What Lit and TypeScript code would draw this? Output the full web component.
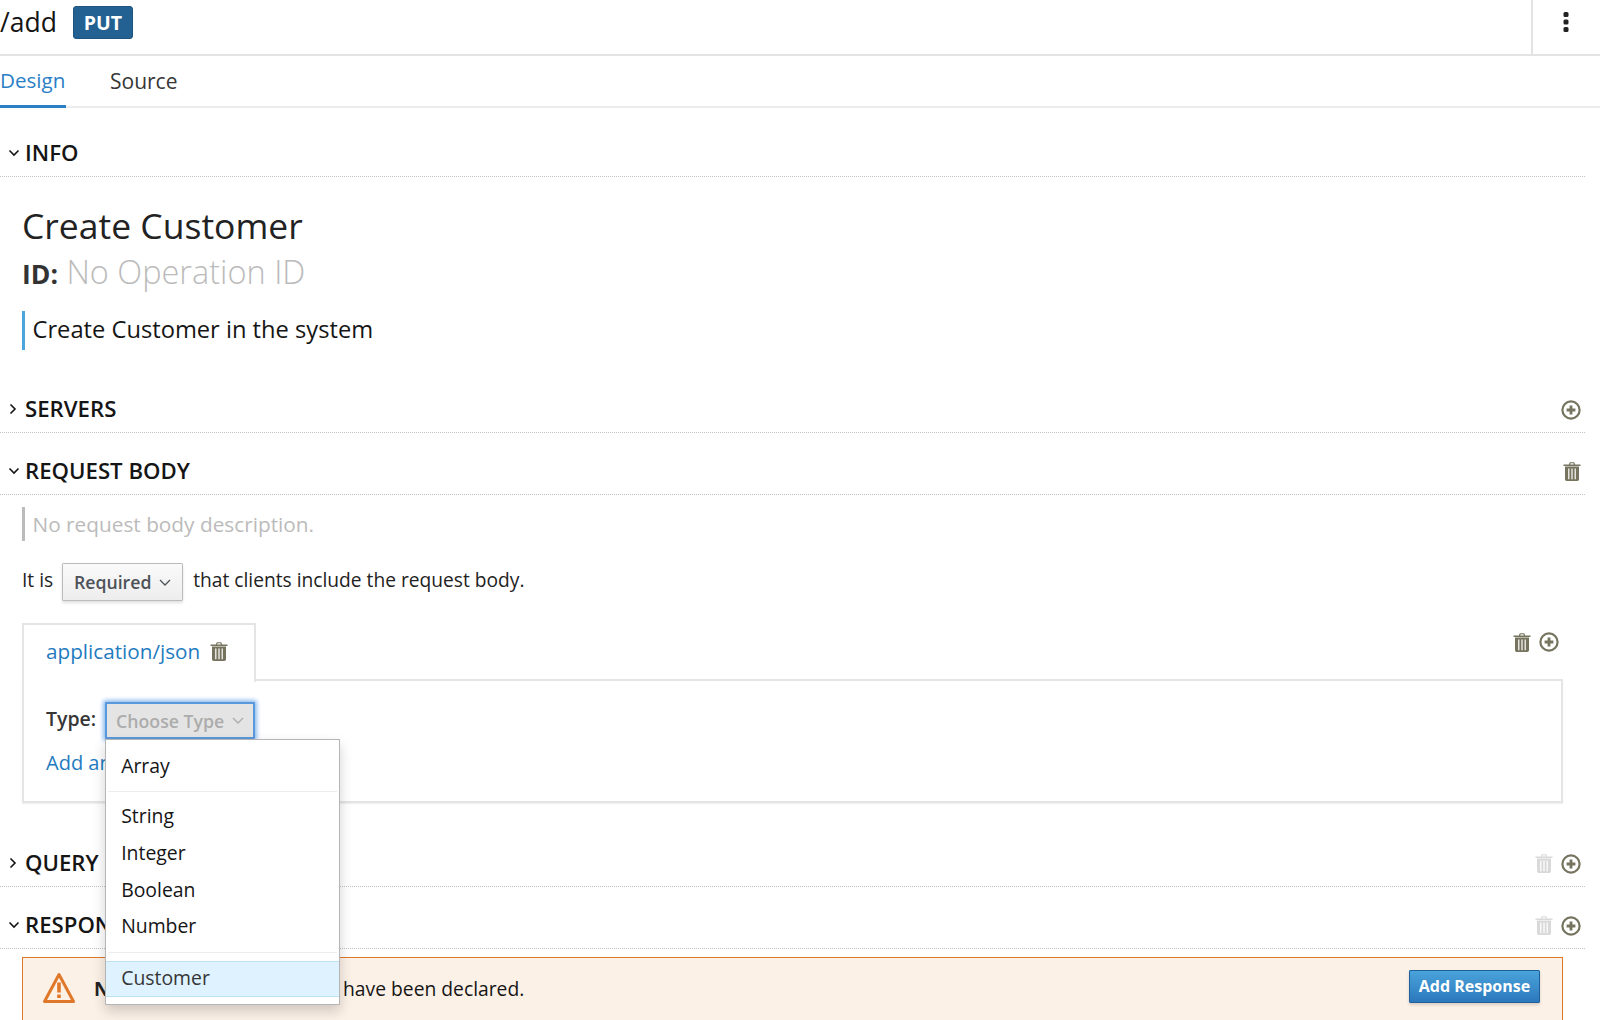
import { LitElement, html, css } from "lit";
import { customElement } from "lit/decorators.js";

const chevDown = html`<svg class="chev" width="12" height="8" viewBox="0 0 12 8"><path d="M1.5 1.5 6 6l4.5-4.5" fill="none" stroke="#151515" stroke-width="1.6"/></svg>`;
const chevRight = html`<svg class="chev" width="12" height="12" viewBox="0 0 12 12"><path d="M3.5 1.5 8 6l-4.5 4.5" fill="none" stroke="#151515" stroke-width="1.6"/></svg>`;
const caret = (c: string) => html`<svg class="caret" width="12" height="7" viewBox="0 0 12 7"><path d="M1 1l5 5 5-5" fill="none" stroke="${c}" stroke-width="1.3"/></svg>`;
const trash = (c = "#76745f") => html`<svg class="ico" width="18" height="19" viewBox="0 0 18 19"><path fill="${c}" d="M5.8 2.4 6.8.3h4.4l1 2.1h5.3v1.5H.5V2.4zM7.6 1.3 7.2 2.4h3.6l-.4-1.1z"/><path fill="${c}" fill-rule="evenodd" d="M2 4.6h14v12.7A1.7 1.7 0 0 1 14.3 19H3.7A1.7 1.7 0 0 1 2 17.3zM5.2 6.4v10.8h1.2V6.4zm3.2 0v10.8h1.2V6.4zm3.2 0v10.8h1.2V6.4z"/></svg>`;
const plus = () => html`<svg class="ico" width="20" height="20" viewBox="0 0 20 20"><circle cx="10" cy="10" r="8.6" fill="none" stroke="#76745f" stroke-width="2.2"/><path d="M10 5.6v8.8M5.6 10h8.8" stroke="#76745f" stroke-width="2.8"/></svg>`;

@customElement("app-root")
export class AppRoot extends LitElement {
  static styles = css`
    :host { display: block; width: 1600px; height: 1020px; overflow: hidden; background: #fff; font-family: "Open Sans", "Liberation Sans", sans-serif; color: #151515; font-size: 20px; }
    * { box-sizing: border-box; }
    .top { display: flex; align-items: center; height: 56px; border-bottom: 2px solid #e3e3e3; }
    .path { font-size: 26.5px; line-height: 36px; margin: -10px 16px 0 0; }
    .badge { width: 60px; height: 33px; margin-top: -10px; background: #236192; border: 1px solid #1d5480; border-radius: 3px; color: #fff; font-weight: 700; font-size: 19.5px; display: flex; align-items: center; justify-content: center; }
    .kebab { margin-left: auto; width: 69px; height: 54px; border-left: 2px solid #e3e3e3; display: flex; align-items: center; justify-content: center; padding: 0 2px 10px 0; }
    .tabs { display: flex; height: 52px; border-bottom: 2px solid #ededed; }
    .tab { height: 52px; padding-top: 9px; font-size: 21px; color: #363636; line-height: 32px; }
    .tab.on { width: 66px; font-size: 20.6px; padding-top: 8px; color: #2a7fc6; border-bottom: 3px solid #2a7fc6; margin-right: 44px; }
    .head { height: 46px; margin: 16px 0 0; width: 1585px; border-bottom: 1px dotted #c4c4c4; display: flex; align-items: center; padding: 0 4px 2px 8px; }
    .head.first { margin-top: 23px; }
    .head .name { font-size: 22.2px; font-weight: 600; white-space: nowrap; margin-left: 5px; line-height: 30px; }
    .head.closed { padding-left: 7px; }
    .head.closed .name { margin-left: 6px; }
    .spacer { margin-left: auto; margin-top: 2px; display: flex; gap: 8px; align-items: center; }
    .ico { display: block; flex: none; }
    .info { padding: 22px 0 0 22px; height: 194px; }
    .title { font-size: 35.5px; line-height: 53px; color: #222; }
    .opid { font-size: 32.5px; line-height: 40px; font-weight: 300; color: #bbb; }
    .opid b { font-weight: 700; color: #333; font-size: 26.5px; }
    .desc { margin: 17px 0 0 0; border-left: 3px solid #4aa5dc; height: 39px; padding-left: 7.5px; font-size: 23.7px; line-height: 37px; }
    .rb { padding: 12px 0 0 22px; width: 1563px; height: 330px; }
    .none { border-left: 3px solid #bbb; height: 34px; padding-left: 7.5px; font-size: 20.8px; line-height: 34px; color: #bbb; }
    .req { display: flex; align-items: center; height: 38px; margin-top: 22px; font-size: 19.2px; color: #222; }
    .btn { display: flex; align-items: center; justify-content: center; gap: 8px; font-weight: 600; font-size: 17.7px; border-radius: 1px; }
    .required { width: 121px; height: 38px; margin: 0 10px 0 9px; background: linear-gradient(#fafafa, #ededed); border: 1px solid #bbb; color: #4d5258; box-shadow: 0 2px 3px rgba(0,0,0,.12); }
    .req span { margin-top: -5px; }
    .mt-row { display: flex; align-items: flex-start; height: 56px; margin-top: 22px; }
    .mt { width: 234px; height: 59px; border: 2px solid #e5e5e5; border-bottom: none; background: #fff; position: relative; z-index: 1; display: flex; align-items: center; padding: 0 0 5px 22px; gap: 10px; font-size: 20.7px; color: #1f7bc0; }
    .mt-icons { margin-left: auto; margin-right: 4px; margin-top: 9px; display: flex; gap: 8px; align-items: center; }
    .panel { border: 2px solid #e5e5e5; height: 124px; padding: 19px 0 0 22px; box-shadow: 0 1px 1px rgba(0,0,0,.06); }
    .type { display: flex; align-items: center; font-weight: 600; color: #363636; font-size: 19.5px; height: 38px; }
    .type-label { margin-top: -2px; }
    .typebox { position: relative; margin: 3px 0 0 9px; }
    .choose { width: 150px; height: 37px; background: #e4e4e4; color: #acacac; border: 2px solid #5a98dc; box-shadow: 0 0 4px 2px #8fbcef; }
    .menu { position: absolute; left: 0; top: 37px; width: 235px; height: 266px; background: #fff; border: 1px solid #b5b5b5; box-shadow: 0 6px 12px rgba(0,0,0,.18); z-index: 5; font-weight: 400; padding: 9px 0 0; color: #151515; font-size: 19.4px; }
    .item { height: 36.7px; line-height: 34px; padding-left: 15px; white-space: nowrap; }
    .sep { height: 1px; background: #ededed; margin: 6px 2px 8px; }
    .sep.a { margin: 5px 2px 7.5px; }
    .sel { height: 36px; margin-top: 6px; background: #def3ff; border-top: 1px solid #bee1f4; border-bottom: 1px solid #bee1f4; color: #363636; line-height: 32px; }
    .add { margin-top: 10px; color: #1f7bc0; font-size: 20px; line-height: 30px; white-space: nowrap; }
    .warn { margin: 8px 0 0 22px; width: 1541px; height: 90px; background: #fcf1e7; border: 1.5px solid #e0782b; display: flex; align-items: flex-start; padding: 12px 22px 0 19px; font-size: 19.3px; }
    .warn svg { margin-top: 1px; flex: none; }
    .warn .msg { margin-left: 18px; margin-top: 4px; line-height: 30px; white-space: nowrap; }
    .warn b { display: inline-block; width: 244px; font-weight: 700; color: #222; }
    .addr { margin-left: auto; width: 131px; height: 33px; padding-bottom: 2px; color: #fff; background: linear-gradient(#4aa3da, #2b78bc); border: 1px solid #1f5f9c; font-weight: 700; font-size: 16px; box-shadow: 0 2px 3px rgba(0,0,0,.15); border-radius: 1px; }
  `;

  private section(name: string, open: boolean, icons: unknown, first = false) {
    return html`<div class="head ${open ? "" : "closed"} ${first ? "first" : ""}">
      ${open ? chevDown : chevRight}<span class="name">${name}</span>
      <div class="spacer">${icons}</div>
    </div>`;
  }

  render() {
    return html`
      <div class="top">
        <div class="path">/add</div>
        <div class="badge">PUT</div>
        <div class="kebab"><svg width="6" height="22" viewBox="0 0 6 22"><rect x=".5" y="1" width="5" height="5" rx="1.5" fill="#222"/><rect x=".5" y="8.5" width="5" height="5" rx="1.5" fill="#222"/><rect x=".5" y="16" width="5" height="5" rx="1.5" fill="#222"/></svg></div>
      </div>
      <div class="tabs"><div class="tab on">Design</div><div class="tab">Source</div></div>

      ${this.section("INFO", true, "", true)}
      <div class="info">
        <div class="title">Create Customer</div>
        <div class="opid"><b>ID:</b> No Operation ID</div>
        <div class="desc">Create Customer in the system</div>
      </div>

      ${this.section("SERVERS", false, plus())}
      ${this.section("REQUEST BODY", true, trash())}
      <div class="rb">
        <div class="none">No request body description.</div>
        <div class="req"><span>It is</span><div class="btn required">Required ${caret("#4d5258")}</div><span>that clients include the request body.</span></div>
        <div class="mt-row">
          <div class="mt">application/json ${trash()}</div>
          <div class="mt-icons">${trash()}${plus()}</div>
        </div>
        <div class="panel">
          <div class="type"><span class="type-label">Type:</span>
            <div class="typebox">
              <div class="btn choose">Choose Type ${caret("#acacac")}</div>
              <div class="menu">
                <div class="item">Array</div>
                <div class="sep a"></div>
                <div class="item">String</div>
                <div class="item">Integer</div>
                <div class="item">Boolean</div>
                <div class="item">Number</div>
                <div class="sep"></div>
                <div class="item sel">Customer</div>
              </div>
            </div>
          </div>
          <div class="add">Add an example</div>
        </div>
      </div>

      ${this.section("QUERY PARAMETERS", false, html`${trash("#d9d9d9")}${plus()}`)}
      ${this.section("RESPONSES", true, html`${trash("#d9d9d9")}${plus()}`)}
      <div class="warn">
        <svg width="34" height="33" viewBox="0 0 34 33"><path d="M17 3.5 2.5 30.5h29z" fill="none" stroke="#e0782b" stroke-width="3" stroke-linejoin="round"/><path d="M15.2 11.5h3.6v10h-3.6zM15.2 23.4h3.6v3.6h-3.6z" fill="#e0782b"/></svg>
        <div class="msg"><b>No Responses</b> have been declared.</div>
        <div class="btn addr">Add Response</div>
      </div>
    `;
  }
}
